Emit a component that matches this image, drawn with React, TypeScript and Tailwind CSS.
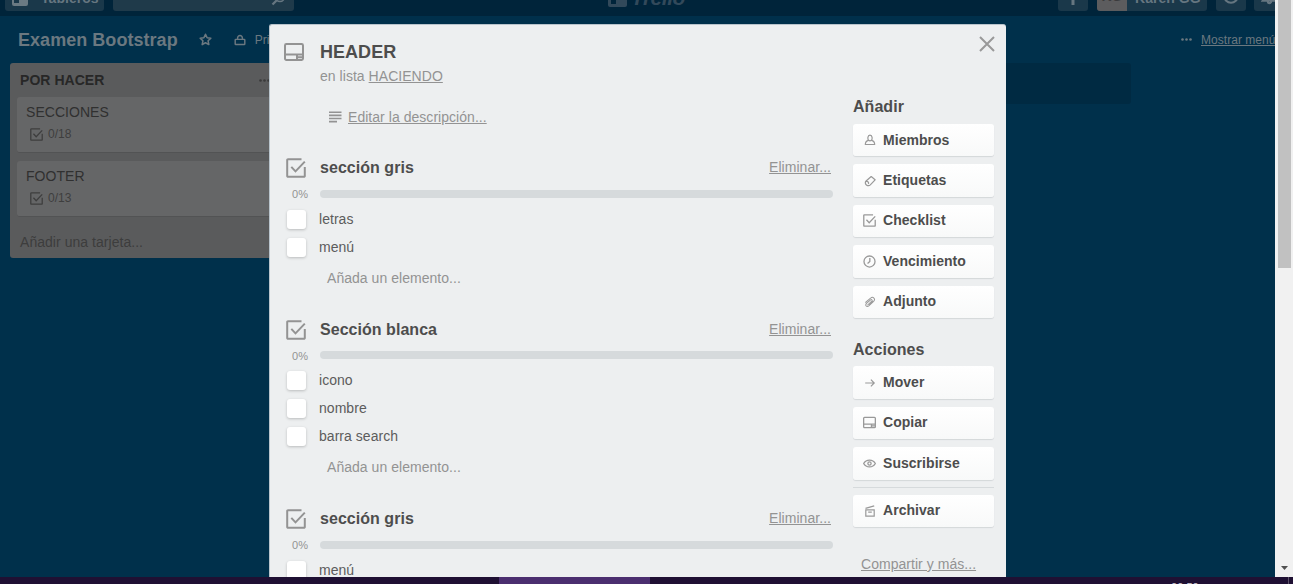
import type { ReactNode } from 'react';

type IconProps = { className?: string };

const svgBase = {
  viewBox: '0 0 20 20',
  fill: 'none',
  stroke: 'currentColor',
  strokeWidth: 2,
} as const;

const CheckIcon = ({ className }: IconProps) => (
  <svg {...svgBase} className={className}>
    <path d="M15.5 1.2H2a.8.8 0 0 0-.8.8v16a.8.8 0 0 0 .8.8h16a.8.8 0 0 0 .8-.8V9" />
    <path d="M5.3 8.8l4.2 4.6L18.8 3.6" />
  </svg>
);

const CardIcon = ({ className }: IconProps) => (
  <svg {...svgBase} className={className}>
    <rect x="1" y="2" width="18" height="16" rx="1.4" />
    <path d="M1 12.6h18M13 12.6V18M13 15.3h6" />
  </svg>
);

const MemberIcon = ({ className }: IconProps) => (
  <svg {...svgBase} className={className}>
    <path d="M7.6 10.6C5.9 8.6 5.6 2 10 2s4.1 6.600 2.400 8.600c2.600.5 5.400 2 5.400 6.900H2.200c0-4.900 2.800-6.400 5.400-6.900z" strokeLinejoin="round" />
    <path d="M7.600 10.600c1.400 1 3.400 1 4.800 0" />
  </svg>
);

const LabelIcon = ({ className }: IconProps) => (
  <svg {...svgBase} className={className} strokeLinejoin="round">
    <path d="M12 2.500L18.500 8l-8 8.500c-2 2-4.500 1.500-6.500 0s-2.500-4.500-.5-6.500z" />
    <path d="M3 11c2.500-1.500 5.500 1 4.500 4" />
  </svg>
);

const ClockIcon = ({ className }: IconProps) => (
  <svg {...svgBase} className={className}>
    <circle cx="10" cy="10" r="8.500" />
    <path d="M10.500 4.500V10L7 13" />
  </svg>
);

const ClipIcon = ({ className }: IconProps) => (
  <svg {...svgBase} className={className} strokeWidth={1.700} strokeLinecap="round">
    <path d="M6 15l7-6.500c1.500-1.500-.5-3.500-2-2L4.500 12C1 15.500 4.500 19.500 8 16.500l8-7.500c4-4-1-9-5-5.500L2.500 10.500" />
    <path d="M8.500 14.500l6-5.500" />
  </svg>
);

const ArrowIcon = ({ className }: IconProps) => (
  <svg {...svgBase} className={className}>
    <path d="M2 10h15M11.500 4.500L17 10l-5.500 5.500" />
  </svg>
);

const EyeIcon = ({ className }: IconProps) => (
  <svg {...svgBase} className={className}>
    <path d="M1 10c4-7 14-7 18 0-4 7-14 7-18 0z" strokeLinejoin="round" />
    <circle cx="10" cy="10" r="2.500" />
  </svg>
);

const ArchiveIcon = ({ className }: IconProps) => (
  <svg {...svgBase} className={className}>
    <path d="M3 8h14v10.500H3zM2.500 5.500L17 1.500M7 12h6" />
  </svg>
);

const StarIcon = ({ className }: IconProps) => (
  <svg {...svgBase} className={className} strokeWidth={2.400}>
    <path d="M10 2l2.500 5.300 5.700.7-4.200 4 1.100 5.800L10 15l-5.100 2.800L6 12 1.800 8l5.700-.7z" strokeLinejoin="round" />
  </svg>
);

const LockIcon = ({ className }: IconProps) => (
  <svg {...svgBase} className={className} strokeWidth={2.400}>
    <rect x="2" y="9" width="16" height="8.500" rx="1" />
    <path d="M6 9V6.500a4 4 0 0 1 8 0V9" />
  </svg>
);

const LinesIcon = ({ className }: IconProps) => (
  <svg viewBox="0 0 13 12" className={className} fill="currentColor">
    <path d="M0 .5h12.500v1.600H0zM0 3.600h12.500v1.600H0zM0 6.700h12.500v1.600H0zM0 9.800h8v1.600H0z" />
  </svg>
);

const Dots = ({ className }: IconProps) => (
  <svg viewBox="0 0 11 3" className={className} fill="currentColor">
    <circle cx="1.500" cy="1.500" r="1.300" />
    <circle cx="5.500" cy="1.500" r="1.300" />
    <circle cx="9.500" cy="1.500" r="1.300" />
  </svg>
);

function TopBar() {
  return (
    <div className="h-4 overflow-hidden bg-[#00243a]">
      <div className="-mt-6 flex h-10 w-[1290px] items-center pl-[5px] text-[14px] font-bold text-[#667680]">
        <div className="flex h-[30px] w-[99px] shrink-0 items-center rounded-[3px] bg-[#1a384a] pt-[3px] pl-[7px]">
          <svg viewBox="0 0 16 16" className="h-4 w-4">
            <rect width="16" height="16" rx="2" fill="#6b7a83" />
            <rect x="2" y="2" width="5" height="11" fill="#1a384a" />
            <rect x="9" y="2" width="5" height="7" fill="#1a384a" />
          </svg>
          <span className="ml-[13px] leading-none">Tableros</span>
        </div>
        <div className="ml-[9px] flex h-[30px] w-[181px] shrink-0 items-center justify-end rounded-[3px] bg-[#1f3a4a] pr-2 pt-1">
          <svg {...svgBase} className="h-[15px] w-[15px]">
            <circle cx="12" cy="8" r="6" />
            <path d="M8 12l-6 6" strokeWidth="3" />
          </svg>
        </div>
        <div className="ml-[314px] flex w-[112px] shrink-0 items-center pt-[3px] text-[#32495a]">
          <svg viewBox="0 0 19 19" className="h-[19px] w-[19px]">
            <rect width="19" height="19" rx="2" fill="currentColor" />
            <rect x="3" y="3" width="5" height="13" fill="#00243a" />
            <rect x="11" y="3" width="5" height="8" fill="#00243a" />
          </svg>
          <span className="ml-1 text-[21px] leading-none italic tracking-[-0.5px]">Trello</span>
        </div>
        <div className="ml-[338px] flex h-[30px] w-[30px] shrink-0 items-center justify-center rounded-[3px] bg-[#1a384a] pt-[3px]">
          <svg viewBox="0 0 14 14" className="h-3.5 w-3.5" fill="none" stroke="currentColor" strokeWidth="3">
            <path d="M7 0v14M1 7h12" />
          </svg>
        </div>
        <div className="ml-[9px] flex h-[30px] w-[110px] shrink-0 items-center rounded-[3px] bg-[#1a384a]">
          <span className="flex h-[30px] w-[30px] items-center justify-center rounded-l-[3px] bg-[#5c5c5e] text-[#3b3b3d]">KG</span>
          <span className="ml-[8px] pt-[3px] leading-none whitespace-nowrap">Karen GG</span>
        </div>
        <div className="ml-[9px] flex h-[30px] w-[30px] shrink-0 items-center justify-center rounded-[3px] bg-[#1a384a]">
          <svg {...svgBase} className="h-4 w-4" strokeWidth={2.500}>
            <circle cx="10" cy="10" r="8.500" />
            <path d="M10 9v6M10 5v2" />
          </svg>
        </div>
        <div className="ml-2 flex h-[30px] w-[30px] shrink-0 items-center justify-center rounded-[3px] bg-[#1a384a]">
          <svg {...svgBase} className="h-[17px] w-[17px]" strokeWidth={2.500}>
            <path d="M2 15h16l-3-4V7a5 5 0 0 0-10 0v4zM8 15.500c0 3 4 3 4 0" />
          </svg>
        </div>
      </div>
    </div>
  );
}

function ListCard({ title, count }: { title: string; count: string }) {
  return (
    <div className="h-[56px] rounded-[3px] border-b border-[#525354] bg-[#656667] pl-[9px] pt-[5px]">
      <div className="text-[14px] leading-[20px] text-[#303030]">{title}</div>
      <div className="mt-[3px] flex h-[18px] items-center text-[12px] text-[#3e3e3e]">
        <CheckIcon className="ml-1 h-[13px] w-[13px]" />
        <span className="ml-[5px]">{count}</span>
      </div>
    </div>
  );
}

function Board() {
  return (
    <div className="flex h-full flex-col">
      <TopBar />
      <div className="flex h-[47px] items-center justify-between pl-[18px] text-[#6b7880]">
        <div className="flex items-center">
          <h1 className="text-[18px] leading-[22px] font-bold">Examen Bootstrap</h1>
          <StarIcon className="ml-[21px] h-[13px] w-[13px]" />
          <LockIcon className="ml-[22px] h-[12px] w-[12px]" />
          <span className="ml-[9px] text-[12px]">Privado</span>
        </div>
        <div className="flex w-[94px] items-center overflow-hidden">
          <Dots className="h-[3px] w-[11px] shrink-0" />
          <span className="ml-[9px] text-[12px] whitespace-nowrap underline">Mostrar menú</span>
        </div>
      </div>
      <div className="flex items-start justify-between pl-[10px] pr-[144px]">
        <div className="h-[195px] w-[272px] rounded-[3px] bg-[#5a5b5c]">
          <div className="flex h-[34px] items-center pl-[10px] text-[#272727]">
            <h2 className="text-[14px] font-bold">POR HACER</h2>
            <Dots className="ml-[155px] h-[3px] w-[11px] text-[#3a3a3a]" />
          </div>
          <div className="flex flex-col gap-2 px-[7px]">
            <ListCard title="SECCIONES" count="0/18" />
            <ListCard title="FOOTER" count="0/13" />
          </div>
          <div className="pl-[10px] pt-[15px] text-[14px] leading-[20px] text-[#3d3d3d]">Añadir una tarjeta...</div>
        </div>
        <div className="h-[41px] w-[270px] rounded-[3px] bg-[#002a42]" />
      </div>
    </div>
  );
}

function Checklist({ title, items }: { title: string; items: string[] }) {
  return (
    <section className="mb-[20.500px]">
      <div className="flex h-7 items-center">
        <CheckIcon className="ml-[16px] h-5 w-5 text-[#939393]" />
        <h3 className="ml-[14px] flex-1 text-[16px] font-bold text-[#4d4d4d]">{title}</h3>
        <a className="mr-[2px] pb-px text-[14px] text-[#939393] underline">Eliminar...</a>
      </div>
      <div className="flex h-[23px] items-center">
        <span className="ml-[22px] w-[28px] pt-[2px] text-[11px] leading-none text-[#939393]">0%</span>
        <div className="h-2 flex-1 rounded-full bg-[#d6dadc]" />
      </div>
      {items.map((item) => (
        <div key={item} className="flex h-7 items-center">
          <span className="ml-[17px] h-[19px] w-[19px] rounded-[3px] bg-white shadow-[0_1px_3px_rgba(0,0,0,0.22)]" />
          <span className="ml-[13px] text-[14px] text-[#5c5c5c]">{item}</span>
        </div>
      ))}
      <div className="flex h-[34px] items-center pl-[57px] text-[14px] text-[#939393]">Añada un elemento...</div>
    </section>
  );
}

function SideButton({ icon, children }: { icon: ReactNode; children: ReactNode }) {
  return (
    <button className="flex h-[32.400px] w-full items-center rounded-[3px] bg-linear-to-b from-white to-[#f8f9f9] text-[14px] font-bold text-[#4d4d4d] shadow-[0_1px_1px_#d3d7d9]">
      <span className="flex w-[30px] justify-center pl-[3px] text-[#999]">{icon}</span>
      {children}
    </button>
  );
}

function Sidebar() {
  return (
    <aside className="ml-5 w-[141px] pt-[72px]">
      <h3 className="h-[27px] text-[16px] leading-[20px] font-bold text-[#4d4d4d]">Añadir</h3>
      <div className="flex flex-col gap-2">
        <SideButton icon={<MemberIcon className="h-[12px] w-[12px]" />}>Miembros</SideButton>
        <SideButton icon={<LabelIcon className="h-[12px] w-[12px]" />}>Etiquetas</SideButton>
        <SideButton icon={<CheckIcon className="h-[13px] w-[13px]" />}>Checklist</SideButton>
        <SideButton icon={<ClockIcon className="h-[13px] w-[13px]" />}>Vencimiento</SideButton>
        <SideButton icon={<ClipIcon className="h-[12px] w-[12px]" />}>Adjunto</SideButton>
      </div>
      <h3 className="mt-[22px] h-[26.400px] text-[16px] leading-[20px] font-bold text-[#4d4d4d]">Acciones</h3>
      <div className="flex flex-col gap-2">
        <SideButton icon={<ArrowIcon className="h-[12px] w-[12px]" />}>Mover</SideButton>
        <SideButton icon={<CardIcon className="h-[13px] w-[13px]" />}>Copiar</SideButton>
        <SideButton icon={<EyeIcon className="h-[13px] w-[13px]" />}>Suscribirse</SideButton>
      </div>
      <div className="mt-[7px] mb-[7px] h-px bg-[#d6dadc]" />
      <SideButton icon={<ArchiveIcon className="h-[12px] w-[12px]" />}>Archivar</SideButton>
      <a className="mt-[27px] block pl-2 text-[14px] leading-[20px] text-[#939393] underline">Compartir y más...</a>
    </aside>
  );
}

function CardWindow() {
  return (
    <div className="absolute top-6 left-[269px] flex h-[553px] w-[737px] overflow-hidden rounded-t-[3px] border-t border-l border-[#b9c4cc] bg-[#edeff0]">
      <div className="w-[563px] shrink-0">
        <div className="flex h-[39px] items-center pt-[14px]">
          <CardIcon className="ml-[14px] h-[20px] w-[20px] text-[#939393]" />
          <h2 className="ml-[16px] text-[18px] leading-[22px] font-bold text-[#4d4d4d]">HEADER</h2>
        </div>
        <div className="pt-[2px] pl-[50px] text-[14px] leading-[20px] text-[#939393]">
          en lista <a className="underline">HACIENDO</a>
        </div>
        <div className="mt-[21px] flex h-[20px] items-center pl-[59px] text-[14px] text-[#939393]">
          <LinesIcon className="h-3 w-[13px]" />
          <a className="ml-[6px] underline">Editar la descripción...</a>
        </div>
        <div className="pt-[27px]">
          <Checklist title="sección gris" items={['letras', 'menú']} />
          <Checklist title="Sección blanca" items={['icono', 'nombre', 'barra search']} />
          <Checklist title="sección gris" items={['menú']} />
        </div>
      </div>
      <Sidebar />
      <button className="absolute top-[11px] right-[11px] text-[#999]" aria-label="Cerrar">
        <svg viewBox="0 0 16 16" className="h-4 w-4" fill="none" stroke="currentColor" strokeWidth="2">
          <path d="M1 1l14 14M15 1L1 15" />
        </svg>
      </button>
    </div>
  );
}

export default function App() {
  return (
    <div className="flex h-[584px] w-[1293px] flex-col overflow-hidden font-['Liberation_Sans',Arial,sans-serif] tracking-[0.04px]">
      <div className="flex h-[577px]">
        <main className="relative w-[1275px] overflow-hidden bg-[#00304b]">
          <Board />
          <CardWindow />
        </main>
        <div className="flex w-[18px] flex-col items-center justify-between bg-[#f1f1f1] pb-[7px]">
          <div className="h-[268px] w-[13px] bg-[#c1c1c1]" />
          <svg viewBox="0 0 7 4" className="h-1 w-[7px]" fill="#505050">
            <path d="M0 0h7L3.500 4z" />
          </svg>
        </div>
      </div>
      <div className="flex h-[7px] overflow-hidden bg-[#1f1033] pl-[499px]">
        <div className="h-full w-[151px] bg-[#4b2e6f]" />
        <span className="ml-[521px] pt-[5px] text-[11px] leading-none text-[#cfc9d6]">00:50</span>
        <div className="ml-auto mr-[4px] h-full w-px bg-[#5d5269]" />
      </div>
    </div>
  );
}
